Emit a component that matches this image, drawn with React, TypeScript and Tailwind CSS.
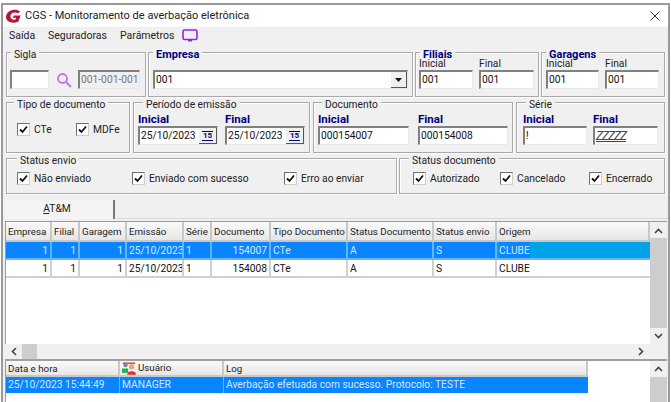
import React from 'react';

const Group = ({ title, blue, className, children, tx }: { title: string; blue?: boolean; className: string; children?: React.ReactNode; tx: string }) => (
  <div className={`relative border border-[#a9a9a9] shadow-[inset_1px_1px_0_#fff,1px_1px_0_#fff] ${className}`}>
    <span className={`absolute -top-[3px] ${tx} bg-[#f0f0f0] px-[3px] leading-[10px] whitespace-nowrap ${blue ? 'font-bold text-[11px] text-[#000080]' : 'text-[#222]'}`}>{title}</span>
    {children}
  </div>
);

const Input = ({ v, className, disabled }: { v: string; className: string; disabled?: boolean }) => (
  <div className={`h-[19px] border-t-2 border-l-2 border-[#808080] border-r border-b border-r-[#e8e8e8] border-b-[#e8e8e8] leading-[16px] pl-[1px] overflow-hidden whitespace-nowrap ${disabled ? 'bg-[#f0f0f0] text-[#777]' : 'bg-white text-[#111]'} ${className}`}>{v}</div>
);

const Check = ({ label, className }: { label: string; className?: string }) => (
  <div className={`flex items-center gap-[4px] whitespace-nowrap ${className ?? ''}`}>
    <span className="w-[13px] h-[13px] shrink-0 bg-white border-t border-l border-[#707070] border-r border-b border-r-[#ccc] border-b-[#ccc] flex items-center justify-center">
      <svg width="9" height="9" viewBox="0 0 9 9"><path d="M1 4.5 L3.5 7 L8 1.5" fill="none" stroke="#111" strokeWidth="1.8" /></svg>
    </span>
    <span className="text-[#222]">{label}</span>
  </div>
);

const Small = ({ label, v, className }: { label: string; v: string; className: string }) => (
  <div className={`flex flex-col ${className}`}>
    <span className="relative h-[12px] leading-[12px] text-[#222]">{label}</span>
    <Input v={v} className="w-full" />
  </div>
);

const Bold = ({ label, children, className }: { label: string; children: React.ReactNode; className?: string }) => (
  <div className={`flex flex-col ${className ?? ''}`}>
    <span className="leading-[14px] font-bold text-[11.5px] text-[#000080]">{label}</span>
    {children}
  </div>
);

const DateBox = ({ v }: { v: string }) => (
  <div className="w-[80px] h-[19px] border-t-2 border-l-2 border-[#808080] border-r border-b border-r-[#e8e8e8] border-b-[#e8e8e8] bg-white flex items-center justify-between leading-[16px] pl-[1px] text-[#111] whitespace-nowrap">
    <span>{v}</span>
    <span className="w-[18px] h-[16px] bg-[#f0f0f0] border-r border-b border-[#555] flex items-center justify-center">
      <span className="border-t border-b border-[#000080] text-[8px] leading-[8px] font-bold text-[#000080] px-[1px]">15</span>
    </span>
  </div>
);

const cols = [
  { t: 'Empresa', w: 'w-[46px]', right: true, v: '1' },
  { t: 'Filial', w: 'w-[28px]', right: true, v: '1' },
  { t: 'Garagem', w: 'w-[47px]', right: true, v: '1' },
  { t: 'Emissão', w: 'w-[57px]', v: '25/10/2023' },
  { t: 'Série', w: 'w-[28px]', v: '1' },
  { t: 'Documento', w: 'w-[59px]', right: true, v: '' },
  { t: 'Tipo Documento', w: 'w-[77px]', v: 'CTe' },
  { t: 'Status Documento', w: 'w-[86px]', v: 'A' },
  { t: 'Status envio', w: 'w-[63px]', v: 'S' },
  { t: 'Origem', w: 'flex-1', v: 'CLUBE' },
];

const headCell = 'shrink-0 h-[20px] bg-gradient-to-b from-[#fafafa] to-[#e6e6e6] border-r-2 border-b-2 border-[#c8c8c8] px-[2px] leading-[20px] whitespace-nowrap overflow-hidden text-[#222] text-[9.75px]';

const Row = ({ doc, sel }: { doc: string; sel?: boolean }) => (
  <div className={`flex h-[18px] ${sel ? 'bg-[#00a2e8]' : 'bg-white'}`}>
    {cols.map((c, i) => {
      const last = i === 9;
      const colored = sel && !last;
      return (
        <div key={c.t} className={`${c.w} shrink-0 h-[18px] leading-[18px] px-[2px] overflow-hidden whitespace-nowrap border-b-2 ${last ? 'border-r-0' : 'border-r-2'} ${sel ? 'border-[#66b5fa] text-[#cfe8ff]' : 'border-[#d0d0d0] text-[#111]'} ${colored ? 'bg-[#0a84ff]' : ''} ${c.right ? 'text-right' : ''}`}>
          {last && sel ? <span className="inline-block bg-[#0a84ff]">{c.v}</span> : i === 5 ? doc : c.v}
        </div>
      );
    })}
  </div>
);

const Chevron = ({ d }: { d: string }) => (
  <svg width="9" height="9" viewBox="0 0 9 9"><path d={d} fill="none" stroke="#444" strokeWidth="1.6" /></svg>
);

export default function App() {
  return (
    <div className="w-[671px] h-[402px] bg-white pt-[3px] pl-[1px] pr-[1px] overflow-hidden text-[10.25px]" style={{ fontFamily: 'Roboto, "Liberation Sans", Arial, sans-serif' }}>
      <div className="w-full h-[399px] border-t-2 border-l-2 border-r-2 border-[#9a9a9a] bg-[#f0f0f0] flex flex-col">
        {/* title */}
        <div className="h-[22px] bg-white flex items-center shrink-0 pl-[2px] pr-[3px]">
          <svg width="17" height="15" viewBox="0 0 17 15" className="mr-[3px]">
            <path d="M15 2.5 L13 4.5 C11 3 6.5 3 5.5 6.5 C5 9.5 8 11.5 10.5 10.5 L11 8.8 L7.5 8.8 L9 6.5 L15.5 6.5 L13.5 12.5 C8.5 15 1 13.5 1 8 C1.5 1 11 -1 15 2.5 Z" fill="#b3183a" />
          </svg>
          <span className="text-[#222] text-[11px]">CGS - Monitoramento de averbação eletrônica</span>
          <svg width="10" height="10" viewBox="0 0 10 10" className="ml-auto mr-[5px]"><path d="M0.5 0.5 L9.5 9.5 M9.5 0.5 L0.5 9.5" stroke="#333" strokeWidth="1" /></svg>
        </div>
        {/* menu */}
        <div className="h-[17px] flex items-center pl-[6px] text-[#222] text-[10.5px] shrink-0">
          <span className="w-[39px]">Saída</span>
          <span className="w-[72px]">Seguradoras</span>
          <span className="w-[62px]">Parâmetros</span>
          <svg width="16" height="13" viewBox="0 0 16 13"><rect x="1" y="1" width="14" height="9.5" rx="1.5" fill="none" stroke="#8a2be2" strokeWidth="1.6" /><rect x="6" y="11" width="4" height="1.5" fill="#8a2be2" /></svg>
        </div>
        {/* row 1 */}
        <div className="flex gap-[2px] pl-[3px] mt-[8px] h-[45px] shrink-0">
          <Group title="Sigla" className="w-[140px]" tx="left-[4px]">
            <div className="flex items-center mt-[17px] pl-[3px]">
              <Input v="" className="w-[39px]" />
              <svg width="16" height="16" viewBox="0 0 16 16" className="ml-[7px]"><circle cx="6.5" cy="6.5" r="4.5" fill="none" stroke="#b57be8" strokeWidth="1.8" /><path d="M10 10 L15 15" stroke="#b57be8" strokeWidth="2" /></svg>
              <Input v="001-001-001" disabled className="w-[62px] ml-[6px]" />
            </div>
          </Group>
          <Group title="Empresa" blue className="w-[265px]" tx="left-[4px]">
            <div className="mt-[17px] mx-[4px] h-[19px] bg-white border-t-2 border-l-2 border-[#808080] border-r border-b border-r-[#e8e8e8] border-b-[#e8e8e8] flex justify-between leading-[16px] pl-[1px] text-[#111]">
              <span>001</span>
              <span className="w-[16px] h-[16px] bg-[#f0f0f0] border-r border-b border-[#555] flex items-center justify-center">
                <svg width="7" height="4" viewBox="0 0 7 4"><path d="M0 0 H7 L3.5 4 Z" fill="#111" /></svg>
              </span>
            </div>
          </Group>
          <Group title="Filiais" blue className="w-[124px]" tx="left-[4px]">
            <div className="flex gap-[6px] pl-[3px] mt-[5px]">
              <Small label="Inicial" v="001" className="w-[54px]" />
              <Small label="Final" v="001" className="w-[55px]" />
            </div>
          </Group>
          <Group title="Garagens" blue className="w-[124px]" tx="left-[4px]">
            <div className="flex gap-[6px] pl-[4px] mt-[5px]">
              <Small label="Inicial" v="001" className="w-[53px]" />
              <Small label="Final" v="001" className="w-[54px]" />
            </div>
          </Group>
        </div>
        {/* row 2 */}
        <div className="flex pl-[3px] mt-[5px] h-[51px] shrink-0">
          <Group title="Tipo de documento" className="w-[124px]" tx="left-[7px]">
            <div className="flex pl-[10px] mt-[19px]">
              <Check label="CTe" className="w-[59px]" />
              <Check label="MDFe" />
            </div>
          </Group>
          <Group title="Período de emissão" className="w-[177px] ml-[3px]" tx="left-[9px]">
            <div className="flex gap-[7px] pl-[4px] mt-[9px]">
              <Bold label="Inicial"><DateBox v="25/10/2023" /></Bold>
              <Bold label="Final"><DateBox v="25/10/2023" /></Bold>
            </div>
          </Group>
          <Group title="Documento" className="w-[200px] ml-[3px]" tx="left-[8px]">
            <div className="flex gap-[9px] pl-[4px] mt-[9px]">
              <Bold label="Inicial" className="w-[91px]"><Input v="000154007" className="w-full" /></Bold>
              <Bold label="Final" className="w-[90px]"><Input v="000154008" className="w-full" /></Bold>
            </div>
          </Group>
          <Group title="Série" className="w-[149px] ml-[3px]" tx="left-[9px]">
            <div className="flex gap-[6px] pl-[6px] mt-[9px]">
              <Bold label="Inicial" className="w-[64px]"><Input v="!" className="w-full" /></Bold>
              <Bold label="Final" className="w-[65px]"><Input v="ZZZZZ" className="w-full italic text-[12px] tracking-[-1px] underline overline decoration-[#444] !text-[#444]" /></Bold>
            </div>
          </Group>
        </div>
        {/* row 3 */}
        <div className="flex pl-[3px] mt-[5px] h-[36px] shrink-0">
          <Group title="Status envio" className="w-[391px]" tx="left-[10px]">
            <div className="flex mt-[12px] pl-[10px]">
              <Check label="Não enviado" className="w-[115px]" />
              <Check label="Enviado com sucesso" className="w-[152px]" />
              <Check label="Erro ao enviar" />
            </div>
          </Group>
          <Group title="Status documento" className="w-[266px] ml-[2px]" tx="left-[9px]">
            <div className="flex mt-[12px] pl-[13px]">
              <Check label="Autorizado" className="w-[87px]" />
              <Check label="Cancelado" className="w-[89px]" />
              <Check label="Encerrado" />
            </div>
          </Group>
        </div>
        {/* tab */}
        <div className="h-[19px] mt-[6px] shrink-0 border-b border-[#d8d8d8] pl-[1px]">
          <div className="w-[111px] h-[19px] border-r-2 border-[#777] bg-[#f4f4f4] flex justify-center leading-[18px] pr-[3px] text-[#222]"><span><span className="underline">A</span>T&amp;M</span></div>
        </div>
        {/* grid */}
        <div className="flex-1 flex flex-col mt-[2px] ml-[2px] mr-[1px] border-t border-[#999] bg-white min-h-0">
          <div className="flex h-[122px] shrink-0">
            <div className="flex-1 min-w-0 border-l border-[#999]">
              <div className="flex">
                {cols.map((c) => (
                  <div key={c.t} className={`${c.w} ${headCell}`}>{c.t}</div>
                ))}
              </div>
              <Row doc="154007" sel />
              <Row doc="154008" />
            </div>
            <div className="w-[17px] bg-[#f0f0f0] flex flex-col items-center pt-[5px]">
              <Chevron d="M1 6 L4.5 2.5 L8 6" />
              <div className="w-full h-[90px] bg-[#cdcdcd] mt-[2px]" />
              <div className="mt-auto pb-[4px]"><Chevron d="M1 3 L4.5 6.5 L8 3" /></div>
            </div>
          </div>
          {/* hscroll */}
          <div className="h-[17px] bg-[#f0f0f0] flex items-start shrink-0 border-b-2 border-[#a0a0a0] pl-[5px] pr-[17px]">
            <div className="mt-[3px]"><Chevron d="M6 1 L2.5 4.5 L6 8" /></div>
            <div className="w-[15px] h-[15px] bg-[#cdcdcd] ml-[3px]" />
            <div className="ml-auto mr-[5px] mt-[3px]"><Chevron d="M3 1 L6.5 4.5 L3 8" /></div>
          </div>
          {/* log */}
          <div className="flex flex-1 min-h-0">
            <div className="flex-1 border-l border-[#999]">
              <div className="w-[582px]">
                <div className="flex">
                  <div className={`w-[114px] !h-[16px] !leading-[16px] ${headCell}`}>Data e hora</div>
                  <div className={`w-[104px] !h-[16px] flex items-center gap-[2px] ${headCell}`}>
                    <svg width="14" height="13" viewBox="0 0 16 14"><rect x="0" y="7" width="7" height="5" fill="#22b14c" /><circle cx="4" cy="3" r="2.5" fill="#7f7fc0" /><circle cx="11" cy="5" r="3" fill="#e8a080" /><path d="M6 14 C6 9 16 9 16 14 Z" fill="#e03030" /><rect x="1" y="0" width="14" height="2" fill="#d06030" /></svg>
                    <span>Usuário</span>
                  </div>
                  <div className={`w-[364px] !h-[16px] !leading-[16px] ${headCell}`}>Log</div>
                </div>
                <div className="h-[16px] bg-[#0a84ff] flex text-[#cfe8ff] leading-[16px] whitespace-nowrap">
                  <div className="w-[114px] px-[2px] border-r border-[#66b5fa]">25/10/2023 15:44:49</div>
                  <div className="w-[104px] px-[2px] border-r border-[#66b5fa]">MANAGER</div>
                  <div className="flex-1 px-[2px]">Averbação efetuada com sucesso. Protocolo: TESTE</div>
                </div>
              </div>
            </div>
            <div className="w-[17px] bg-[#f0f0f0] flex flex-col items-center pt-[4px]">
              <Chevron d="M1 6 L4.5 2.5 L8 6" />
              <div className="w-full flex-1 bg-[#cdcdcd] mt-[3px]" />
            </div>
          </div>
        </div>
      </div>
    </div>
  );
}
